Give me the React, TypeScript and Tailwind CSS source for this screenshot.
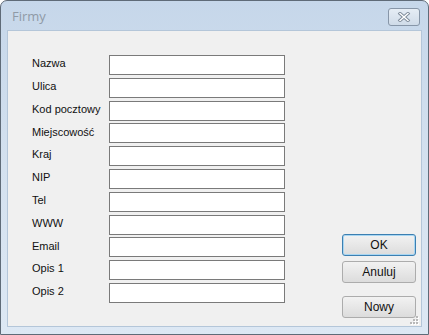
import React from "react";

const fields = [
  "Nazwa",
  "Ulica",
  "Kod pocztowy",
  "Miejscowość",
  "Kraj",
  "NIP",
  "Tel",
  "WWW",
  "Email",
  "Opis 1",
  "Opis 2",
];

function Btn({ label, focused }: { label: string; focused?: boolean }) {
  return (
    <div
      className={
        "w-[74px] h-[22px] rounded-[3px] flex items-center justify-center text-[12px] text-[#111] bg-gradient-to-b from-[#f2f2f2] to-[#dcdcdc] " +
        (focused
          ? "border border-[#3c7fb1] shadow-[inset_0_0_0_1px_#a8d6f2]"
          : "border border-[#acacac]")
      }
    >
      {label}
    </div>
  );
}

export default function App() {
  return (
    <div
      className="w-[429px] h-[335px] rounded-t-[7px] border border-[#5f6b78] bg-gradient-to-b from-[#c6d7ea] via-[#d4e1ef] to-[#dde8f4] flex flex-col px-[6px] pb-[7px] overflow-hidden"
      style={{ fontFamily: '"Liberation Sans", Arial, sans-serif' }}
    >
      <div className="h-[29px] flex items-center justify-between shrink-0">
        <div
          className="pl-[5px] pt-[3px] text-[13px] text-[#8f9aa6]"
          style={{ fontFamily: '"Open Sans", "Noto Sans", sans-serif' }}
        >
          Firmy
        </div>
        <div className="mt-[3px] mr-[2px] w-[32px] h-[18px] rounded-[3px] border border-[#8796a8] bg-gradient-to-b from-[#e6edf5] to-[#cfdbe8] flex items-center justify-center">
          <svg width="14" height="10" viewBox="0 0 14 10">
            <path
              d="M3 1.5 L11 8.5 M11 1.5 L3 8.5"
              stroke="#7d8a99"
              strokeWidth="3.2"
              strokeLinecap="square"
            />
            <path
              d="M3 1.5 L11 8.5 M11 1.5 L3 8.5"
              stroke="#ffffff"
              strokeWidth="1.4"
              strokeLinecap="square"
            />
          </svg>
        </div>
      </div>
      <div className="relative flex-1 border border-[#b4c6d9] bg-[#f0f0f0] flex">
        <div className="pl-[24px] pt-[24px] flex flex-col gap-[2.8px]">
          {fields.map((f) => (
            <div key={f} className="flex items-center h-[20px]">
              <div className="w-[77px] text-[11px] text-[#111] mb-[3px]">{f}</div>
              <div className="w-[176px] h-[20px] border border-[#7a7a7a] bg-white" />
            </div>
          ))}
        </div>
        <div className="ml-auto mr-[5px] pt-[203px] flex flex-col">
          <Btn label="OK" focused />
          <div className="h-[5px]" />
          <Btn label="Anuluj" />
          <div className="h-[13px]" />
          <Btn label="Nowy" />
        </div>
        <svg
          className="absolute right-[2px] bottom-[1px]"
          width="10"
          height="10"
          viewBox="0 0 10 10"
        >
          {[
            [7, 1],
            [4, 4],
            [7, 4],
            [1, 7],
            [4, 7],
            [7, 7],
          ].map(([x, y]) => (
            <g key={`${x}-${y}`}>
              <rect x={x + 1} y={y + 1} width="2" height="2" fill="#ffffff" />
              <rect x={x} y={y} width="2" height="2" fill="#b8b8b8" />
            </g>
          ))}
        </svg>
      </div>
    </div>
  );
}
